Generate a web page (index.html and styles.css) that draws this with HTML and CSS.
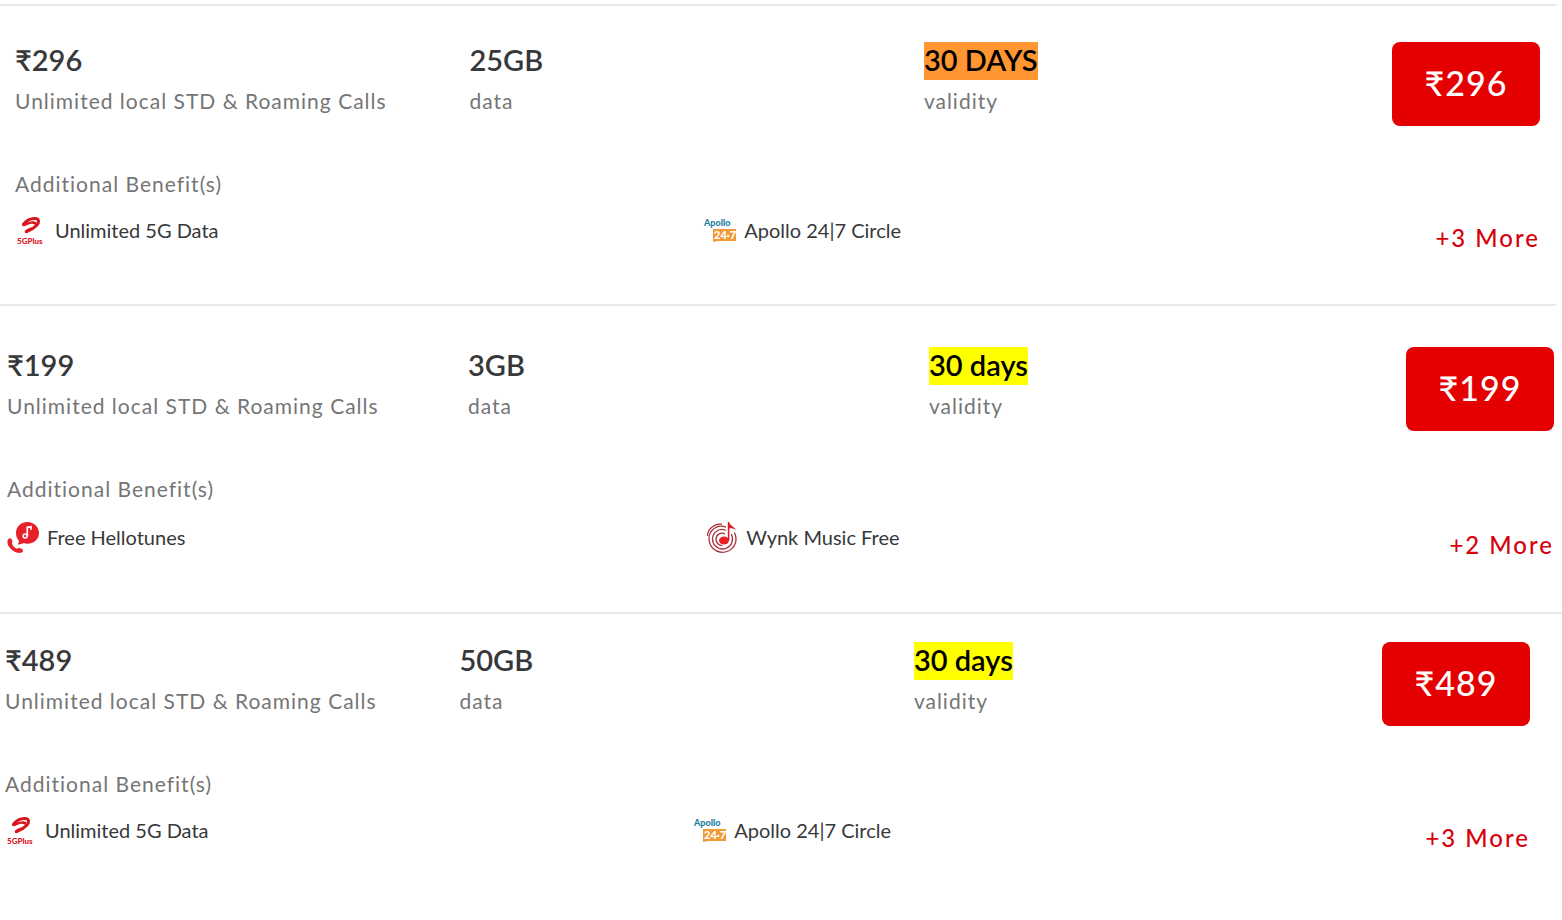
FILE: index.html
```html
<!DOCTYPE html>
<html lang="en">
<head>
    <meta charset="UTF-8">
    <meta name="viewport" content="width=device-width, initial-scale=1.0">
    <title>Prepaid plans - 30 days validity</title>
    <link rel="stylesheet" href="styles.css">
</head>
<body>
    <main class="plans">
        <section class="plan">
            <div class="plan-head">
                <div>
                    <div class="value">₹296</div>
                    <div class="label">Unlimited local STD &amp; Roaming Calls</div>
                </div>
                <div>
                    <div class="value">25GB</div>
                    <div class="label">data</div>
                </div>
                <div>
                    <div class="value"><mark class="active">30 DAYS</mark></div>
                    <div class="label">validity</div>
                </div>
                <button class="buy">₹296</button>
            </div>
            <div class="label benefits-title">Additional Benefit(s)</div>
            <div class="benefits">
                <div class="benefit">
                    <svg class="icon" viewBox="0 0 32 32">
                        <path d="M8.500 10.200C12 6 17 4.200 20.500 4.500c4 .4 3.800 4.200 1 7-2.700 2.700-6 4.700-9.300 5.900" fill="none" stroke="#d9141c" stroke-width="3" stroke-linecap="round"/>
                        <path d="M7.200 10c-.8 1.700.8 2.600 2.800 1.900 2-.8 4-1.900 6.500-2.200 2-.2 3 .6 4 1.800l1-3c-2-1.800-5-1.500-7.500-.5z" fill="#d9141c"/>
                        <path d="M18 13.200c-3 .3-5.500 1.300-7.500 3-1.500 1.500-.8 3.300 1.500 2.900z" fill="#d9141c"/>
                        <text x="2" y="30" font-size="8" fill="#d9141c">5GPlus</text>
                    </svg>
                    Unlimited 5G Data
                </div>
                <div class="benefit">
                    <svg class="icon" viewBox="0 0 32 32">
                        <path d="M9 15h23v12H14l-5 1z" fill="#f19a37"/>
                        <text x="0" y="12" font-size="9" fill="#20809f">Apollo</text>
                        <text x="10" y="25" font-size="11" fill="#fff">24·7</text>
                    </svg>
                    Apollo 24|7 Circle
                </div>
                <a href="#" class="more">+3 More</a>
            </div>
        </section>

        <section class="plan plan-wide">
            <div class="plan-head">
                <div>
                    <div class="value">₹199</div>
                    <div class="label">Unlimited local STD &amp; Roaming Calls</div>
                </div>
                <div>
                    <div class="value">3GB</div>
                    <div class="label">data</div>
                </div>
                <div>
                    <div class="value"><mark>30 days</mark></div>
                    <div class="label">validity</div>
                </div>
                <button class="buy">₹199</button>
            </div>
            <div class="label benefits-title">Additional Benefit(s)</div>
            <div class="benefits">
                <div class="benefit">
                    <svg class="icon" viewBox="0 0 32 32">
                        <path d="M20.500 1C14 1 9 5.700 9 12c0 3 1 5.500 2.800 7.500.2 1.700-.3 2.900-1.200 3.900 2.600.1 4.600-.4 6.200-1.300 1.200.4 2.400.6 3.700.6C27 22.700 32 18 32 12S27 1 20.500 1z" fill="#e6212a"/>
                        <path d="M20.300 15V6.300l3.700-.6v3" fill="none" stroke="#fff" stroke-width="1.700"/>
                        <circle cx="18.200" cy="15" r="2" fill="none" stroke="#fff" stroke-width="1.600"/>
                        <path d="M2 17.500c-2 1.700-2.200 5 .3 8.600 2.700 3.900 7.700 6.500 11.500 5.700 1.600-.3 2.400-1.200 2.200-2.300-.2-1-1.700-2.200-3.200-2.500-1.500-.2-2.300.9-3.500.6C7.500 27 5.400 24.500 5 22.500c-.2-1.100.7-1.500.4-2.700-.3-1.500-2.200-3.200-3.400-2.300z" fill="#e6212a"/>
                    </svg>
                    Free Hellotunes
                </div>
                <div class="benefit">
                    <svg class="icon" viewBox="0 0 32 32">
                        <g fill="none" stroke="#a8323c" stroke-width="1.300">
                            <path d="M16 3.200C8 2.200 1.500 8.500 1.500 15"/>
                            <path d="M20 6.200C12 2.800 3 8.500 3 17.500 3 25.200 9 31.300 16.500 31.300S30 25.300 30 18c0-2.500-.6-4.500-1.600-6.500"/>
                            <path d="M20 9.500C13.500 6.300 6.500 11 6.500 18c0 5.500 4.500 10 10 10s10-4.500 10-10c0-2-.4-3.500-1.200-5"/>
                            <path d="M19 12.800c-4.500-2-9 1-9 5.500 0 3.500 2.800 6.300 6.400 6.300"/>
                        </g>
                        <ellipse cx="18" cy="19.500" rx="5" ry="4" fill="#ee1c25"/>
                        <path d="M21.800 19.500V1h1.400c.3 3 4.500 4.500 7 8-2-1.200-4.500-1.800-6.800-1.600v12.100z" fill="#d8202a"/>
                    </svg>
                    Wynk Music Free
                </div>
                <a href="#" class="more">+2 More</a>
            </div>
        </section>

        <section class="plan plan-last">
            <div class="plan-head">
                <div>
                    <div class="value">₹489</div>
                    <div class="label">Unlimited local STD &amp; Roaming Calls</div>
                </div>
                <div>
                    <div class="value">50GB</div>
                    <div class="label">data</div>
                </div>
                <div>
                    <div class="value"><mark>30 days</mark></div>
                    <div class="label">validity</div>
                </div>
                <button class="buy">₹489</button>
            </div>
            <div class="label benefits-title">Additional Benefit(s)</div>
            <div class="benefits">
                <div class="benefit">
                    <svg class="icon" viewBox="0 0 32 32">
                        <path d="M8.500 10.200C12 6 17 4.200 20.500 4.500c4 .4 3.800 4.200 1 7-2.700 2.700-6 4.700-9.300 5.900" fill="none" stroke="#d9141c" stroke-width="3" stroke-linecap="round"/>
                        <path d="M7.200 10c-.8 1.700.8 2.600 2.800 1.900 2-.8 4-1.900 6.500-2.200 2-.2 3 .6 4 1.800l1-3c-2-1.800-5-1.500-7.500-.5z" fill="#d9141c"/>
                        <path d="M18 13.200c-3 .3-5.500 1.300-7.500 3-1.500 1.500-.8 3.300 1.500 2.900z" fill="#d9141c"/>
                        <text x="2" y="30" font-size="8" fill="#d9141c">5GPlus</text>
                    </svg>
                    Unlimited 5G Data
                </div>
                <div class="benefit">
                    <svg class="icon" viewBox="0 0 32 32">
                        <path d="M9 15h23v12H14l-5 1z" fill="#f19a37"/>
                        <text x="0" y="12" font-size="9" fill="#20809f">Apollo</text>
                        <text x="10" y="25" font-size="11" fill="#fff">24·7</text>
                    </svg>
                    Apollo 24|7 Circle
                </div>
                <a href="#" class="more">+3 More</a>
            </div>
        </section>
    </main>
</body>
</html>
```
FILE: styles.css
```css
* {
    box-sizing: border-box;
}

body {
    margin: 0;
    background-color: #fff;
    color: #37383a;
    font-family: Lato, "Noto Sans", sans-serif;
}

.plans {
    padding-top: 4px;
}

.plan {
    margin-right: 6px;
    padding: 36px 16px 50px 15px;
    border-top: 2px solid #e8e8e8;
}

.plan-wide {
    padding: 41px 2px 51px 7px;
}

.plan-last {
    margin-right: 0;
    padding: 28px 32px 50px 5px;
}

.plan-head {
    display: grid;
    grid-template-columns: 29.8% 29.8% 1fr auto;
    height: 84px;
}

.value {
    height: 38px;
    font-size: 29px;
    font-weight: 600;
    line-height: 36px;
}

mark {
    display: inline-block;
    padding-bottom: 2px;
    background-color: #ff0;
    color: #000;
}

mark.active {
    background-color: #ff9632;
}

.label {
    margin-top: 7px;
    color: #757575;
    font-size: 21px;
    line-height: 28px;
    letter-spacing: 1px;
}

.buy {
    width: 148px;
    height: 84px;
    padding: 0 0 4px;
    border: none;
    border-radius: 8px;
    background-color: #e40000;
    color: #fff;
    font-family: inherit;
    font-size: 34px;
    font-weight: 500;
    letter-spacing: 1px;
    cursor: pointer;
}

.benefits-title {
    margin-top: 44px;
}

.benefits {
    display: grid;
    grid-template-columns: 45.2% 1fr auto;
    height: 40px;
    margin-top: 16px;
}

.plan-wide .benefits {
    margin-top: 18px;
}

.benefit {
    display: flex;
    align-items: center;
    gap: 8px;
    height: 32px;
    font-size: 20px;
}

.icon {
    width: 32px;
    height: 32px;
    overflow: visible;
}

.icon text {
    font-weight: 900;
}

.more {
    align-self: end;
    color: #d8000c;
    font-size: 24px;
    font-weight: 500;
    line-height: 32px;
    letter-spacing: 2px;
    text-decoration: none;
}
```
